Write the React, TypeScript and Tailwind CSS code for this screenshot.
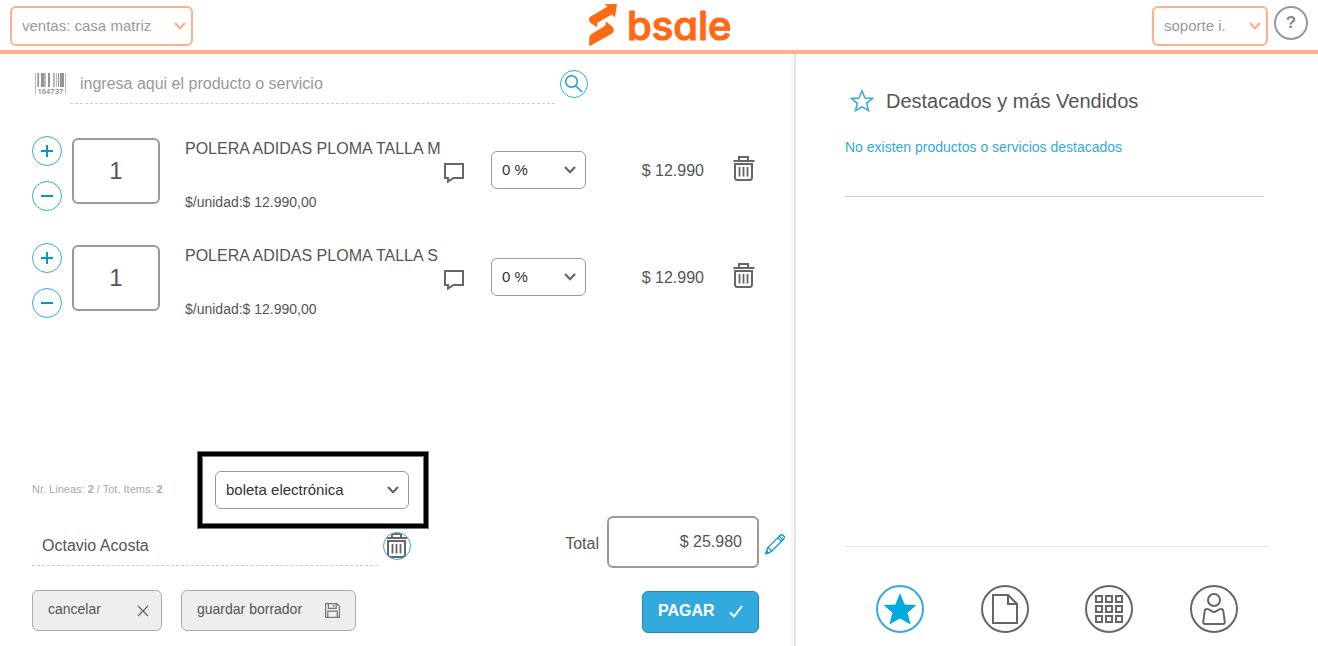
import React, { useState } from 'react';

interface IconProps {
  className?: string;
}

const Chevron: React.FC<IconProps> = ({ className }) => (
  <svg className={className} width="12" height="8" viewBox="0 0 12 8" fill="none" stroke="currentColor" strokeWidth="2.3">
    <path d="M1 1l5 5.2L11 1" />
  </svg>
);

const TrashIcon: React.FC<IconProps> = ({ className }) => (
  <svg className={className} width="22" height="26" viewBox="0 0 22 26" fill="none" stroke="#666" strokeWidth="2">
    <path d="M6 5V1h9v4M0.5 5h21" />
    <path d="M2 8h17v13.5a2.5 2.5 0 0 1-2.5 2.5h-12A2.5 2.5 0 0 1 2 21.5z" />
    <path d="M6.5 11v9.5M10.5 11v9.5M14.5 11v9.5" strokeWidth="1.8" />
  </svg>
);

const CommentIcon: React.FC = () => (
  <svg width="22" height="20" viewBox="0 0 22 20" fill="none" stroke="#666" strokeWidth="2">
    <path d="M2 1h18v14h-9.5L5 18.600V15H2z" />
  </svg>
);

const BarcodeIcon: React.FC = () => (
  <svg width="31" height="22" viewBox="0 0 31 22" className="shrink-0 overflow-visible">
    <path d="M0 0h1v21H0zM2 0h1v14H2zM9 0h2v14H9zM18 0h2v14h-2zM21 0h1v14h-1zM30 0h1v21h-1z" fill="#bbb" />
    <path d="M3 0h1v14H3zM6 0h3v14H6zM13 0h2v14h-2zM23 0h1v14h-1zM25 0h4v14h-4z" fill="#949494" />
    <text x="2.5" y="21" fontSize="7.5" fontWeight="600" fill="#888" fontFamily="Open Sans, sans-serif">
      164737
    </text>
  </svg>
);

const Logo: React.FC = () => (
  <svg
    width="142"
    height="44"
    viewBox="0 0 142 44"
    fill="#ff6a13"
    role="img"
    aria-label="bsale"
    className="overflow-visible"
  >
    <path d="M16.3.3L29 0l-2 13.200-3.200-2.600L9.600 18.800 8.600 23.300l-5.800-4.300C.8 17.500.4 14.200 2.200 12.800L19.700 2.500z" />
    <path d="M18 17.500l5 3.900c4 3.400 3.800 6.400-.6 9.200L2 41.900l-.9-.3.2-7.600c.1-1.900 1-3.200 2.400-4.100l13.600-8.400z" />
    <text
      x="39"
      y="36"
      fontSize="40"
      fontWeight="500"
      fontFamily="Inter, sans-serif"
      stroke="#ff6a13"
      strokeWidth="1.2"
      strokeLinejoin="round"
      className="[font-feature-settings:'cv11']"
    >
      bsale
    </text>
  </svg>
);

const StarOutline: React.FC = () => (
  <svg width="24" height="24" viewBox="0 0 24 24" fill="none" stroke="#33aadd" strokeWidth="1.5">
    <path d="M12 1.800l3 7.200 7.500.4-5.900 4.900 2 7.400L12 17.800l-6.600 3.900 2-7.400L1.500 9.400 9 9z" />
  </svg>
);

interface SelectProps {
  label: string;
  options: string[];
  wrapperClass: string;
  selectClass: string;
  chevronClass: string;
}

const SelectBox: React.FC<SelectProps> = ({ label, options, wrapperClass, selectClass, chevronClass }) => (
  <div className={`relative shrink-0 ${wrapperClass}`}>
    <select aria-label={label} className={`w-full appearance-none bg-white outline-none ${selectClass}`}>
      {options.map((option) => (
        <option key={option}>{option}</option>
      ))}
    </select>
    <Chevron className={`pointer-events-none absolute top-1/2 -translate-y-1/2 ${chevronClass}`} />
  </div>
);

const products = [
  { id: 1, name: 'POLERA ADIDAS PLOMA TALLA M', unit: '12.990,00', total: '12.990' },
  { id: 2, name: 'POLERA ADIDAS PLOMA TALLA S', unit: '12.990,00', total: '12.990' },
];

const roundButton =
  'flex size-[30px] items-center justify-center rounded-full border border-[#33aadd] text-[#0099cc]';

const ProductRow: React.FC<{ product: (typeof products)[number] }> = ({ product }) => {
  const [quantity, setQuantity] = useState(1);

  return (
    <li className="flex items-start pr-[30px]">
      <div className="flex flex-col gap-[15px]">
        <button aria-label="Agregar" className={roundButton} onClick={() => setQuantity(quantity + 1)}>
          <svg width="12" height="12" viewBox="0 0 12 12" stroke="currentColor" strokeWidth="2">
            <path d="M6 0v12M0 6h12" />
          </svg>
        </button>
        <button aria-label="Quitar" className={roundButton} onClick={() => setQuantity(Math.max(1, quantity - 1))}>
          <svg width="12" height="12" viewBox="0 0 12 12" stroke="currentColor" strokeWidth="2">
            <path d="M0 6h12" />
          </svg>
        </button>
      </div>
      <input
        aria-label="Cantidad"
        value={quantity}
        onChange={(e) => setQuantity(Number(e.target.value) || 1)}
        className="mt-0.5 ml-2.5 h-[66px] w-[88px] rounded-md border-2 border-[#999] text-center text-2xl text-[#555] outline-none"
      />
      <div className="ml-[25px] flex h-[75px] min-w-0 flex-1 flex-col justify-between whitespace-nowrap">
        <p className="text-base leading-[26px]">{product.name}</p>
        <p className="text-sm leading-[18px]">$/unidad:$ {product.unit}</p>
      </div>
      <button aria-label="Comentario" className="flex h-[73px] items-center">
        <CommentIcon />
      </button>
      <div className="ml-[26px] flex h-[68px] items-center">
        <SelectBox
          label="Descuento"
          options={['0 %', '5 %', '10 %']}
          wrapperClass="w-[95px]"
          selectClass="h-[38px] rounded-md border border-[#999] pl-2.5 text-[15px] text-[#333]"
          chevronClass="right-[10px] text-[#666]"
        />
        <span className="w-[118px] pt-0.5 text-right">$ {product.total}</span>
        <button aria-label="Eliminar" className="ml-[29px] pb-0.5">
          <TrashIcon />
        </button>
      </div>
    </li>
  );
};

const SalePanel: React.FC = () => (
  <section className="flex flex-col border-r-2 border-[#e2e4e6] pt-2.5 pr-[9px] pb-[13px] pl-8 shadow-[inset_-3px_0_0_#f7f7f7]">
    <div className="flex w-[74%] items-center pr-px pl-[3px]">
      <BarcodeIcon />
      <input
        aria-label="Producto o servicio"
        placeholder="ingresa aqui el producto o servicio"
        className="ml-1 h-10 min-w-0 flex-1 border-b border-dashed border-[#ccc] px-2.5 text-base outline-none placeholder:text-[#999]"
      />
      <button
        aria-label="Buscar"
        className="ml-[5px] flex size-7 items-center justify-center rounded-full border border-[#33aadd]"
      >
        <svg width="18" height="18" viewBox="0 0 18 18" fill="none" stroke="#0d99cc" strokeWidth="1.4">
          <circle cx="6.5" cy="6.5" r="5.8" />
          <path d="M10.700 10.700l6.500 6.300" />
        </svg>
      </button>
    </div>

    <ul className="flex flex-col gap-8 pt-8">
      {products.map((product) => (
        <ProductRow key={product.id} product={product} />
      ))}
    </ul>

    <div className="mt-auto flex items-end justify-between pt-8">
      <div className="w-[397px]">
        <div className="flex items-center">
          <p className="w-[165px] pb-0.5 text-[11px] text-[#aaa]">
            Nr. Lineas: <b>2</b> / Tot. Items: <b>2</b>
          </p>
          <div className="border border-[#777] bg-black p-1">
            <div className="border border-[#777] bg-white py-3.5 pr-3.5 pl-3">
              <SelectBox
                label="Tipo de documento"
                options={['boleta electrónica', 'factura electrónica']}
                wrapperClass="w-[194px]"
                selectClass="h-[38px] rounded-md border border-[#999] pl-2.5 text-[15px] text-[#333]"
                chevronClass="right-[10px] text-[#666]"
              />
            </div>
          </div>
        </div>
        <div className="flex items-start">
          <input
            aria-label="Cliente"
            defaultValue="Octavio Acosta"
            className="h-[37px] w-[346px] border-b border-dashed border-[#ccc] px-2.5 pb-0.5 text-base text-[#555] outline-none"
          />
          <button
            aria-label="Quitar cliente"
            className="mt-[3px] ml-[5px] flex size-7 items-center justify-center overflow-hidden rounded-full border border-[#33aadd]"
          >
            <TrashIcon className="shrink-0" />
          </button>
        </div>
        <div className="mt-6 mb-0.5 flex gap-[19px] text-sm">
          <button className="flex h-[41px] w-[130px] items-center justify-between rounded-md border border-[#aaa] bg-[#eee] pr-3 pl-[15px]">
            <span className="pb-[3px]">cancelar</span>
            <svg width="12" height="12" viewBox="0 0 12 12" stroke="#666" strokeWidth="1.3">
              <path d="M1 1l10 10M11 1L1 11" />
            </svg>
          </button>
          <button className="flex h-[41px] w-[175px] items-center justify-between rounded-md border border-[#aaa] bg-[#eee] px-[15px]">
            <span className="pb-[3px]">guardar borrador</span>
            <svg width="15" height="15" viewBox="0 0 15 15" fill="none" stroke="#777" strokeWidth="1.2">
              <path d="M.6.6h11.200l2.600 2.600v11.200H.6z" />
              <path d="M3.400.6v4.800h7.800V.6M2.800 14.400V8.200h9.400v6.200M8.800 2v2" />
            </svg>
          </button>
        </div>
      </div>

      <div className="flex flex-col items-end gap-[23px]">
        <div className="flex items-center">
          <label htmlFor="total" className="pt-1 text-base">
            Total
          </label>
          <input
            id="total"
            readOnly
            value="$ 25.980"
            className="ml-2 h-[52px] w-[152px] rounded-md border-2 border-[#999] px-[15px] text-right text-base text-[#555] outline-none"
          />
          <button aria-label="Editar total" className="ml-1.5 pt-1">
            <svg width="20" height="22" viewBox="0 0 20 22" fill="none" stroke="#0d99cc" strokeWidth="1.3">
              <path d="M1 20.500l1.400-5.400L14.800 2.600c2.200-2.200 6 .8 3.800 3.600L6.200 18.800z" />
              <path d="M2.400 15.100c2 .2 3.600 1.700 3.800 3.700M12.600 4.600l4 4M14.200 3l4 4" />
              <path d="M1 20.500l.7-2.500 1.800 1.800z" fill="#0d99cc" />
            </svg>
          </button>
        </div>
        <button className="mr-[26px] flex h-[42px] w-[117px] items-center justify-between rounded-md border border-[#2288bb] bg-[#33aadd] px-[15px] pb-0.5 text-base font-bold text-white">
          PAGAR
          <svg width="14" height="13" viewBox="0 0 14 13" fill="none" stroke="currentColor" strokeWidth="2">
            <path d="M1 7.500L5 11.500 13 1" />
          </svg>
        </button>
      </div>
    </div>
  </section>
);

const tabButton = 'flex size-12 items-center justify-center rounded-full border-2';

const FeaturedPanel: React.FC = () => (
  <section className="flex flex-col pt-8 pr-[50px] pb-[13px] pl-[49px]">
    <h2 className="flex items-center gap-3 pl-[5px] text-xl leading-[30px]">
      <StarOutline />
      Destacados y más Vendidos
    </h2>
    <p className="mt-5 text-sm leading-[22px] text-[#33aadd]">No existen productos o servicios destacados</p>
    <hr className="mt-[38px] mr-1 border-[#ccc]" />

    <nav className="mt-auto flex justify-between border-t border-[#e4e4e4] pt-[38px] pr-[30px] pl-[31px]">
      <button aria-label="Destacados" className={`${tabButton} border-[#33aadd]`}>
        <svg width="34" height="32" viewBox="0 0 34 32" fill="#00aadd" className="shrink-0">
          <path d="M17 0l4.600 11.400L33.500 12l-9 7.800 3.200 11.700L17 25.600 6.300 31.500l3.200-11.700-9-7.800 11.900-.6z" />
        </svg>
      </button>
      <button aria-label="Documentos" className={`${tabButton} border-[#666]`}>
        <svg width="28" height="32" viewBox="0 0 28 32" fill="none" stroke="#666" strokeWidth="2">
          <path d="M2 2h15l9 9v19H2zM17 2v9h9" />
        </svg>
      </button>
      <button aria-label="Categorías" className={`${tabButton} border-[#666]`}>
        <svg width="28" height="28" viewBox="0 0 28 28" fill="none" stroke="#666" strokeWidth="2">
          <path d="M1 1h6v6H1zM11 1h6v6h-6zM21 1h6v6h-6zM1 11h6v6H1zM11 11h6v6h-6zM21 11h6v6h-6zM1 21h6v6H1zM11 21h6v6h-6zM21 21h6v6h-6z" />
        </svg>
      </button>
      <button aria-label="Clientes" className={`${tabButton} border-[#666]`}>
        <svg width="24" height="32" viewBox="0 0 24 32" fill="none" stroke="#666" strokeWidth="2">
          <circle cx="12" cy="7" r="6" />
          <path d="M5 16c-1.400 0-2.200 1-2.300 2.200L1.200 29c-.1 1.200.5 2 1.800 2h18c1.300 0 1.900-.8 1.800-2l-1.500-10.800C21.200 17 20.400 16 19 16c-3 0-4.600 3-7 3s-4-3-7-3z" />
        </svg>
      </button>
    </nav>
  </section>
);

export default function App() {
  return (
    <div className="flex min-h-screen flex-col bg-white font-['Liberation_Sans',Arial,sans-serif] text-[#555]">
      <header className="grid grid-cols-[1fr_auto_1fr] items-start border-b-4 border-[#ffb08a] px-2.5">
        <SelectBox
          label="Sucursal"
          options={['ventas: casa matriz']}
          wrapperClass="mt-1.5 w-[183px]"
          selectClass="h-10 rounded-md border-2 border-[#ffb08a] pl-2.5 text-[15px] text-[#999]"
          chevronClass="right-[7px] text-[#ffb08a]"
        />
        <a href="#" className="flex h-[50px] items-start pt-1">
          <Logo />
        </a>
        <div className="flex items-start justify-end gap-1.5 pt-1.5">
          <SelectBox
            label="Usuario"
            options={['soporte i.']}
            wrapperClass="w-[116px]"
            selectClass="h-10 rounded-md border-2 border-[#ffb08a] pl-2.5 text-[15px] text-[#999]"
            chevronClass="right-[7px] text-[#ffb08a]"
          />
          <button className="flex size-[34px] items-center justify-center rounded-full border-2 border-[#999] text-[17px] font-bold text-[#888]">
            ?
          </button>
        </div>
      </header>
      <main className="grid flex-1 grid-cols-[796fr_522fr]">
        <SalePanel />
        <FeaturedPanel />
      </main>
    </div>
  );
}
